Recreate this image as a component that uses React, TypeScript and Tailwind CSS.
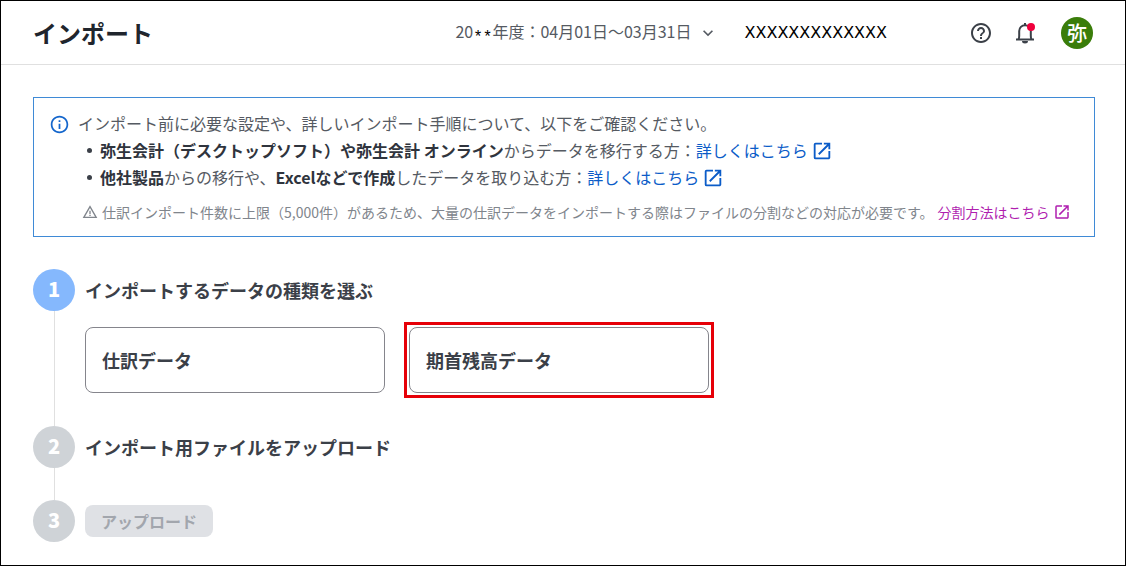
import React from "react";
import { MdInfoOutline, MdHelpOutline, MdOpenInNew, MdWarningAmber, MdKeyboardArrowDown } from "react-icons/md";

interface StepProps {
  number: number;
  active?: boolean;
  last?: boolean;
  className?: string;
  children: React.ReactNode;
}

const BellIcon: React.FC = () => (
  <svg viewBox="0 0 24 24" className="size-6" fill="none" stroke="#3b4048" strokeWidth="2">
    <path d="M5.5 18.5c.5-1 .7-2 .7-3.5v-5a5.8 5.8 0 0 1 11.6 0v5c0 1.5.2 2.5.7 3.5" />
    <path d="M3 18.5h18" />
    <path d="M12 2v2.5" />
    <path d="M9 20a3 2.5 0 0 0 6 0z" fill="#3b4048" stroke="none" />
  </svg>
);

const Header: React.FC = () => (
  <header className="flex h-16 items-center border-b border-[#e0e0e0] px-8">
    <h1 className="text-2xl font-bold text-[#20252d]">インポート</h1>
    <button type="button" className="ml-auto flex items-center gap-1 text-[#555a62]">
      <span>
        20<span className="align-sub font-['Liberation_Mono'] leading-none text-black">**</span>
        年度：04月01日～03月31日
      </span>
      <MdKeyboardArrowDown className="size-6 p-0.5" />
    </button>
    <span className="ml-[25px] font-['DejaVu_Sans'] text-black">XXXXXXXXXXXXX</span>
    <div className="ml-[82px] flex items-center">
      <button type="button" aria-label="ヘルプ">
        <MdHelpOutline className="size-6 text-[#3b4048]" />
      </button>
      <button type="button" aria-label="お知らせ" className="relative ml-5">
        <BellIcon />
        <span className="absolute top-0.5 right-0.5 size-2 rounded-full bg-[#f0003c]" />
      </button>
      <button
        type="button"
        className="ml-6 flex size-8 items-center justify-center rounded-full bg-[#3a7d0a] text-xl font-medium text-white"
      >
        弥
      </button>
    </div>
  </header>
);

const DetailLink: React.FC = () => (
  <a href="#" className="inline-flex items-center gap-[3px] text-[#0b5cc8]">
    詳しくはこちら
    <MdOpenInNew className="size-[22px]" />
  </a>
);

const Bullet: React.FC = () => <span className="mr-2 size-[5px] rounded-full bg-[#3b4048]" />;

const InfoBox: React.FC = () => (
  <section className="flex gap-2 border border-[#3f8ad6] py-3 pr-4 pl-[15px] text-[#555a62]">
    <MdInfoOutline className="mt-1 size-[21px] shrink-0 text-[#1466cc]" />
    <div className="min-w-0 flex-1">
      <p className="leading-[27px]">
        インポート前に必要な設定や、詳しいインポート手順について、以下をご確認ください。
      </p>
      <ul className="pl-[9px] leading-[27px]">
        <li className="flex items-center">
          <Bullet />
          <b className="text-[#2f343d]">弥生会計（デスクトップソフト）や弥生会計 オンライン</b>
          からデータを移行する方：
          <DetailLink />
        </li>
        <li className="flex items-center">
          <Bullet />
          <b className="text-[#2f343d]">他社製品</b>
          からの移行や、
          <b className="text-[#2f343d]">Excelなどで作成</b>
          したデータを取り込む方：
          <DetailLink />
        </li>
      </ul>
      <p className="mt-[9px] ml-1 flex items-center text-sm leading-6 text-[#80858c]">
        <MdWarningAmber className="mr-1 size-4 shrink-0" />
        仕訳インポート件数に上限（5,000件）があるため、大量の仕訳データをインポートする際はファイルの分割などの対応が必要です。
        <a href="#" className="ml-1 inline-flex items-center gap-[3px] whitespace-nowrap text-[#b01fb0]">
          分割方法はこちら
          <MdOpenInNew className="size-[18px]" />
        </a>
      </p>
    </div>
  </section>
);

const Step: React.FC<StepProps> = ({ number, active, last, className, children }) => (
  <li className="flex gap-2.5">
    <div className="flex flex-col items-center">
      <span
        className={`flex size-[42px] items-center justify-center rounded-full pb-0.5 text-xl font-black text-white ${
          active ? "bg-[#85b8fd]" : "bg-[#cfd3d7]"
        }`}
      >
        {number}
      </span>
      {!last && <span className="w-px flex-1 bg-[#e0e0e0]" />}
    </div>
    <div className={`flex-1 ${className ?? ""}`}>{children}</div>
  </li>
);

const dataTypeClasses =
  "h-[66px] w-[300px] rounded-lg border border-[#85858c] px-4 text-left text-lg font-bold text-[#3b4048]";

const App: React.FC = () => {
  return (
    <div className="min-h-screen border border-black bg-white font-['Noto_Sans_CJK_JP',sans-serif] text-base">
      <Header />
      <main className="pt-8 pr-[30px] pl-8">
        <InfoBox />
        <ol className="mt-8">
          <Step number={1} active className="pb-7">
            <h2 className="text-lg leading-[42px] font-bold text-[#3b4048]">インポートするデータの種類を選ぶ</h2>
            <div className="mt-[11px] flex items-center gap-[19px]">
              <button type="button" className={dataTypeClasses}>
                仕訳データ
              </button>
              <div className="border-3 border-[#e60008] p-0.5">
                <button type="button" className={`block ${dataTypeClasses}`}>
                  期首残高データ
                </button>
              </div>
            </div>
          </Step>
          <Step number={2} className="pb-8">
            <h2 className="text-lg leading-[42px] font-bold text-[#3b4048]">インポート用ファイルをアップロード</h2>
          </Step>
          <Step number={3} last className="flex items-center">
            <button type="button" disabled className="h-8 rounded-lg bg-[#dfe1e5] px-4 font-bold text-[#a2a6ad]">
              アップロード
            </button>
          </Step>
        </ol>
      </main>
    </div>
  );
};

export default App;
